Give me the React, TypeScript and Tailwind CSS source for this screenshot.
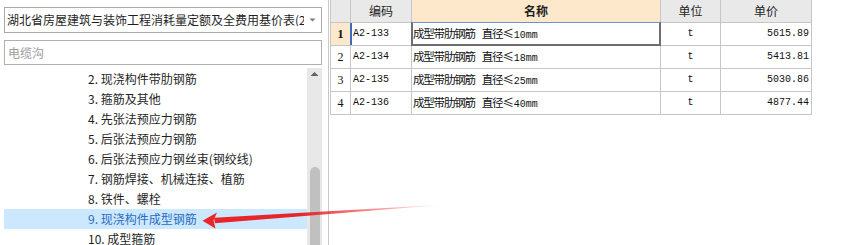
import React from "react";

const treeItems = [
  "2. 现浇构件带肋钢筋",
  "3. 箍筋及其他",
  "4. 先张法预应力钢筋",
  "5. 后张法预应力钢筋",
  "6. 后张法预应力钢丝束(钢绞线)",
  "7. 钢筋焊接、机械连接、植筋",
  "8. 铁件、螺栓",
  "9. 现浇构件成型钢筋",
  "10. 成型箍筋",
];

const rows = [
  { n: "1", code: "A2-133", size: "10", unit: "t", price: "5615.89" },
  { n: "2", code: "A2-134", size: "18", unit: "t", price: "5413.81" },
  { n: "3", code: "A2-135", size: "25", unit: "t", price: "5030.86" },
  { n: "4", code: "A2-136", size: "40", unit: "t", price: "4877.44" },
];

const cjk = { fontFamily: '"Noto Sans CJK SC", "Noto Sans", sans-serif' };
const cell = { fontFamily: '"Liberation Mono", "Noto Sans CJK SC", monospace' };

export default function App() {
  return (
    <div className="relative flex w-[854px] h-[245px] overflow-hidden bg-white text-[#1f1f1f]" style={cjk}>
      {/* Left panel */}
      <div className="w-[329px] shrink-0 flex flex-col pt-[7px] border-r border-[#c8c8c8]">
        <div className="ml-[4px] w-[318px] h-[26px] border border-[#a9a9a9] flex items-center pl-[2px] pr-[4px]">
          <span className="flex-1 overflow-hidden whitespace-nowrap text-[12px] leading-none">
            湖北省房屋建筑与装饰工程消耗量定额及全费用基价表(2018)
          </span>
          <svg width="9" height="6" viewBox="0 0 9 6" className="ml-[4px] shrink-0">
            <path d="M1.5 1.5 L7.5 1.5 L4.5 4.5 Z" fill="#7a7a7a" />
          </svg>
        </div>
        <div className="mt-[7px] ml-[4px] w-[318px] h-[25px] border border-[#b0b0b0] flex items-center pl-[3px] text-[12px] text-[#9c9c9c] leading-none">
          电缆沟
        </div>
        <div className="mt-[3px] flex flex-1 min-h-0">
          <div className="ml-[4px] w-[303px] pt-[1px] flex flex-col">
            {treeItems.map((t, i) => (
              <div
                key={t}
                className={
                  "h-[20px] shrink-0 flex items-center pl-[84px] text-[12px] leading-none whitespace-nowrap " +
                  (i === 7 ? "bg-[#cce8ff] text-[#2a6cc0]" : "")
                }
              >
                {t}
              </div>
            ))}
          </div>
          <div className="w-[15px] bg-[#e8e8e8] flex flex-col">
            <div className="h-[12px] flex items-center justify-center">
              <svg width="9" height="6" viewBox="0 0 9 6">
                <path d="M0.5 5 L8.5 5 L4.5 1 Z" fill="#606060" />
              </svg>
            </div>
            <div className="mt-[87px] ml-[3px] w-[10px] flex-1 bg-[#c0c0c0] rounded-t-[5px]" />
          </div>
        </div>
      </div>

      {/* Right panel */}
      <div className="flex-1 pl-[1px]">
        <div className="w-[482px] border-l border-[#c6c6c6] flex flex-col">
          {/* header */}
          <div className="flex h-[23px] border-b border-[#c6c6c6] text-[12px] leading-none">
            <div className="w-[20px] bg-[#e9e9e9] border-r border-[#c6c6c6]" />
            <div className="w-[61px] bg-[#e9e9e9] border-r border-[#c6c6c6] flex items-center justify-center">编码</div>
            <div className="w-[249px] bg-[#fde8cb] border-r border-[#c6c6c6] flex items-center justify-center font-bold">名称</div>
            <div className="w-[60px] bg-[#e9e9e9] border-r border-[#c6c6c6] flex items-center justify-center">单位</div>
            <div className="w-[91px] bg-[#e9e9e9] border-r border-[#c6c6c6] flex items-center justify-center">单价</div>
          </div>
          {rows.map((r, i) => (
            <div key={r.code} className="flex h-[23px] border-b border-[#c6c6c6] text-[10px] leading-none text-[#111]" style={cell}>
              <div
                className={
                  "w-[20px] border-r border-[#c6c6c6] flex items-center justify-center text-[12px] " +
                  (i === 0 ? "bg-[#fde8cb] font-bold" : "")
                }
                style={{ fontFamily: '"Liberation Serif", serif' }}
              >
                {r.n}
              </div>
              <div className="relative w-[61px] border-r border-[#c6c6c6] flex items-center pl-[2px]">
                {i === 0 && <div className="absolute left-[-1px] top-0 bottom-0 w-[2px] bg-[#3b6cb7]" />}
                {r.code}
              </div>
              <div className="relative w-[249px] border-r border-[#c6c6c6] flex items-center pl-[1px] whitespace-nowrap">
                {i === 0 && (
                  <div className="absolute left-[-1px] top-[-1px] right-[-1px] bottom-[-1px] border-2 border-[#6e6e6e] border-t border-t-[#6a93d0]" />
                )}
                <span className="leading-none">
                  <span className="text-[11.5px] tracking-[-1.2px]" style={cjk}>成型带肋钢筋</span>
                  <span className="inline-block w-[7px]" />
                  <span className="text-[11.5px] tracking-[-1.2px]" style={cjk}>直径≤</span>
                  <span className="pl-[1px]">{r.size}mm</span>
                </span>
              </div>
              <div className="w-[60px] border-r border-[#c6c6c6] flex items-center justify-center">{r.unit}</div>
              <div className="w-[91px] border-r border-[#c6c6c6] flex items-center justify-end pr-[2px]">{r.price}</div>
            </div>
          ))}
        </div>
      </div>

      {/* Red annotation arrow */}
      <svg className="absolute left-0 top-0 pointer-events-none" width="854" height="245" viewBox="0 0 854 245">
        <defs>
          <linearGradient id="fade" x1="447" y1="205" x2="300" y2="212" gradientUnits="userSpaceOnUse">
            <stop offset="0" stopColor="#e8262a" stopOpacity="0" />
            <stop offset="1" stopColor="#e8262a" stopOpacity="1" />
          </linearGradient>
        </defs>
        <polygon points="447,204.6 214,217.8 215,223.2" fill="url(#fade)" />
        <polygon points="202.5,220.8 217,212.5 213.5,220.5 215.5,228.5" fill="#e8262a" />
      </svg>
    </div>
  );
}
